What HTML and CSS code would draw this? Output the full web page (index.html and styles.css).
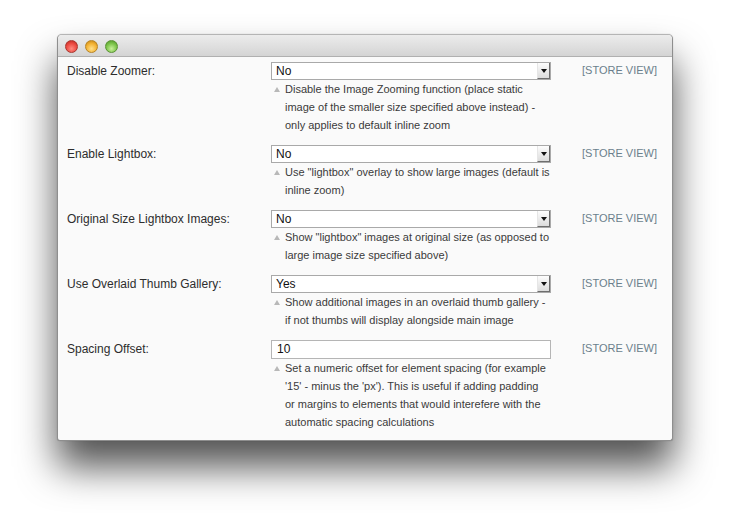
FILE: index.html
```html
<!DOCTYPE html>
<html>
<head>
<meta charset="utf-8">
<link rel="stylesheet" href="styles.css">
</head>
<body>
<div class="window">
  <div class="titlebar">
    <span class="light red"></span>
    <span class="light yellow"></span>
    <span class="light green"></span>
  </div>
  <div class="content">
    <div class="row">
      <div class="label">Disable Zoomer:</div>
      <div class="value">
        <div class="select"><span>No</span><span class="arrow"></span></div>
        <p class="note">Disable the Image Zooming function (place static image of the smaller size specified above instead) - only applies to default inline zoom</p>
      </div>
      <div class="scope">[STORE VIEW]</div>
    </div>
    <div class="row">
      <div class="label">Enable Lightbox:</div>
      <div class="value">
        <div class="select"><span>No</span><span class="arrow"></span></div>
        <p class="note">Use "lightbox" overlay to show large images (default is inline zoom)</p>
      </div>
      <div class="scope">[STORE VIEW]</div>
    </div>
    <div class="row">
      <div class="label">Original Size Lightbox Images:</div>
      <div class="value">
        <div class="select"><span>No</span><span class="arrow"></span></div>
        <p class="note">Show "lightbox" images at original size (as opposed to large image size specified above)</p>
      </div>
      <div class="scope">[STORE VIEW]</div>
    </div>
    <div class="row">
      <div class="label">Use Overlaid Thumb Gallery:</div>
      <div class="value">
        <div class="select"><span>Yes</span><span class="arrow"></span></div>
        <p class="note">Show additional images in an overlaid thumb gallery - if not thumbs will display alongside main image</p>
      </div>
      <div class="scope">[STORE VIEW]</div>
    </div>
    <div class="row last">
      <div class="label">Spacing Offset:</div>
      <div class="value">
        <div class="input">10</div>
        <p class="note">Set a numeric offset for element spacing (for example '15' - minus the 'px'). This is useful if adding padding or margins to elements that would interefere with the automatic spacing calculations</p>
      </div>
      <div class="scope">[STORE VIEW]</div>
    </div>
  </div>
</div>
</body>
</html>
```
FILE: styles.css
```css
html, body {
  margin: 0;
  background: #ffffff;
}
body {
  min-height: 520px;
  box-sizing: border-box;
  padding: 34px 57px 79px;
  font-family: "Liberation Sans", Arial, sans-serif;
}
.window {
  width: 616px;
  height: 407px;
  box-sizing: border-box;
  background: #fafafa;
  border: 1px solid #8e8e8e;
  border-top-color: #b5b5b5;
  border-radius: 5px 5px 3px 3px;
  box-shadow: 0 26px 38px rgba(0, 0, 0, 0.68), 0 0 1px rgba(0,0,0,0.3);
  overflow: hidden;
}
.titlebar {
  height: 22px;
  box-sizing: border-box;
  display: flex;
  align-items: center;
  gap: 7px;
  padding-left: 7px;
  padding-top: 1px;
  background: linear-gradient(#ececec, #d4d4d4);
  border-bottom: 1px solid #b0b0b0;
}
.light {
  width: 13px;
  height: 13px;
  border-radius: 50%;
  box-sizing: border-box;
}
.red {
  background: radial-gradient(circle at 50% 70%, #ff8a80 0%, #ec4a42 55%, #b2251e 100%);
  border: 1px solid #a9352e;
}
.yellow {
  background: radial-gradient(circle at 50% 70%, #ffe08a 0%, #f3b233 55%, #b97d12 100%);
  border: 1px solid #b88424;
}
.green {
  background: radial-gradient(circle at 50% 70%, #c8f09a 0%, #7cc44a 55%, #4b8f25 100%);
  border: 1px solid #5a9234;
}
.content {
  padding: 5px 0 0 9px;
}
.row {
  display: grid;
  grid-template-columns: 204px 280px auto;
  margin-bottom: 11px;
}
.label {
  font-size: 12px;
  color: #2d2d2d;
  line-height: 18px;
}
.select, .input {
  height: 18px;
  box-sizing: border-box;
  border: 1px solid #a9a9a9;
  background: #ffffff;
  font-size: 12px;
  color: #111;
  line-height: 16px;
  padding-left: 4px;
  display: flex;
  justify-content: space-between;
  align-items: stretch;
}
.input {
  height: 19px;
  border-color: #b5b5b5;
  line-height: 17px;
  padding-left: 5px;
}
.arrow {
  width: 13px;
  background: linear-gradient(#fdfdfd, #dcdcdc);
  border-left: 1px solid #e6e6e6;
  border-right: 1px solid #6e6e6e;
  border-bottom: 1px solid #6e6e6e;
  box-sizing: border-box;
  position: relative;
}
.arrow::after {
  content: "";
  position: absolute;
  left: 3px;
  top: 6px;
  border-left: 3px solid transparent;
  border-right: 3px solid transparent;
  border-top: 4px solid #111;
}
.note {
  margin: 0;
  font-size: 11px;
  line-height: 18px;
  color: #3a3a3a;
  padding-left: 14px;
  position: relative;
}
.note::before {
  content: "";
  position: absolute;
  left: 3px;
  top: 7px;
  border-left: 3px solid transparent;
  border-right: 3px solid transparent;
  border-bottom: 5px solid #b8b8b8;
}
.scope {
  margin-left: 31px;
  white-space: nowrap;
  font-size: 11px;
  color: #6b7f8c;
  line-height: 16px;
}
```
